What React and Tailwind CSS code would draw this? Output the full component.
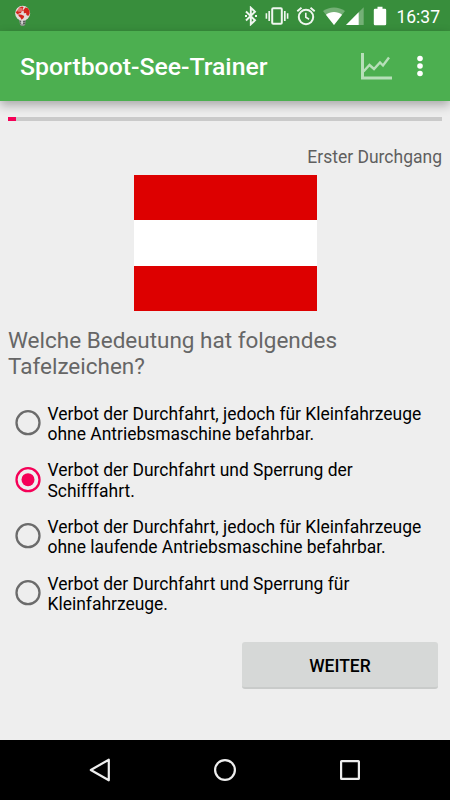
import { useState } from "react"

const answers = [
	["Verbot der Durchfahrt, jedoch für Kleinfahrzeuge", "ohne Antriebsmaschine befahrbar."],
	["Verbot der Durchfahrt und Sperrung der", "Schifffahrt."],
	["Verbot der Durchfahrt, jedoch für Kleinfahrzeuge", "ohne laufende Antriebsmaschine befahrbar."],
	["Verbot der Durchfahrt und Sperrung für", "Kleinfahrzeuge."],
]

function BulbIcon() {
	return (
		<svg className="ml-[14px] h-[22px] w-[18px]" viewBox="0 0 18 22">
			<path d="M5 14.5h7l-.8 5.2-1.4 1.3H7.4L6 19.7z" fill="#8b928b" />
			<path d="M6 16.3h5.4M6.3 18.4h5" stroke="#4b504b" strokeWidth=".9" />
			<path d="M7.3 15.3h1.5v4H7.3z" fill="#e4e4e4" />
			<circle cx="8.6" cy="8.2" r="7.5" fill="#e3dad8" />
			<path
				d="M3 5.4 5 2.8 8 1.4l1.6.8-.8 1.6.8 1.6-2 1-.6 1.6-2.2.4-1 1.2-2-1.8zM9.6 5l1.7-2.4 2.3.4 1.9 2.6.2 3-1.4 2.4-1.9-1-.3-2.1-2.2.3zM4.4 9.2l3.2.5 2.6 1.2-.6 2.2-2 1.6-1.2-2.3-1.8-1.4z"
				fill="#d3261c"
			/>
			<ellipse cx="5.8" cy="4.8" rx="3" ry="2" fill="#fff" opacity=".35" />
		</svg>
	)
}

function StatusBar() {
	return (
		<div className="flex h-[31px] items-center bg-[#388e3c] text-white">
			<BulbIcon />
			<div className="ml-auto flex items-center">
				<svg className="h-[20px] w-[14px]" viewBox="0 0 14 20" fill="none" stroke="#eff6ef" strokeWidth="1.9">
					<path d="m2 5.5 9 8.8-4.2 4V1.7l4.2 4-9 8.8" />
					<path d="M1 10h2M11 10h2" />
				</svg>
				<svg className="ml-[7px] h-[20px] w-[24px]" viewBox="0 0 24 20" fill="none" stroke="#eff6ef">
					<rect x="7.2" y="2.2" width="9.6" height="15.6" rx="1" strokeWidth="2" />
					<path d="M4.2 5v10M19.8 5v10" strokeWidth="1.7" />
					<path d="M1.4 7.2v5.6M22.6 7.2v5.6" strokeWidth="1.6" />
				</svg>
				<svg className="ml-[7px] h-[20px] w-[20px]" viewBox="0 0 20 20" fill="none" stroke="#eff6ef">
					<circle cx="10" cy="11" r="7.2" strokeWidth="2" />
					<path d="M1.3 5.2 5.5 1.7M18.7 5.2l-4.2-3.5" strokeWidth="1.9" />
					<path d="M9.8 6.8v4.5l3.3 2" strokeWidth="1.6" />
				</svg>
				<svg className="ml-[6px] h-[20px] w-[24px]" viewBox="0 0 24 20" fill="#fff">
					<path d="M12 19 1 5.1C4.2 2.8 8 1.5 12 1.5s7.8 1.3 11 3.6z" opacity=".3" />
					<path d="M12 19 3.9 8.700C6.2 7 9 6.1 12 6.1s5.8.9 8.1 2.6z" />
				</svg>
				<svg className="h-[20px] w-[18px]" viewBox="0 0 18 20" fill="#fff">
					<path d="M0 19 17.7 1.3V19z" opacity=".3" />
					<path d="M0 19 12.7 6.3V19z" />
				</svg>
				<svg className="ml-[9px] h-[20px] w-[14px]" viewBox="0 0 14 20" fill="#fff">
					<path d="M4.5.7h5v2H12q1.2 0 1.2 1.2v14.2q0 1.2-1.2 1.2H2Q.8 19.3.8 18.1V3.9Q.8 2.7 2 2.7h2.5z" />
				</svg>
				<span className="mr-[10px] ml-[9px] pt-[2px] text-[17.5px] leading-5">16:37</span>
			</div>
		</div>
	)
}

function AppBar() {
	return (
		<div className="relative flex h-[70px] items-center bg-[#4caf50] pl-[20px] text-white shadow-[0_4px_10px_rgba(0,0,0,0.3)]">
			<h1 className="pt-[2px] text-[24.8px] leading-[30px] font-medium">Sportboot-See-Trainer</h1>
			<svg className="mr-[2px] ml-auto h-[28px] w-[32px]" viewBox="0 0 32 28" fill="none" stroke="#b7dfb9">
				<path d="M2.5 1v25H32" strokeWidth="3" />
				<path d="m3.5 19.5 6-6.5 4.5 4 6-6.5 3 3 6-8" strokeWidth="2.4" />
			</svg>
			<svg className="mr-[25px] ml-[21px] h-[22px] w-[10px]" viewBox="0 0 10 22" fill="#fff">
				<circle cx="5" cy="3.5" r="2.8" />
				<circle cx="5" cy="11" r="2.8" />
				<circle cx="5" cy="18.5" r="2.8" />
			</svg>
		</div>
	)
}

function Answer({ lines, checked, onSelect }) {
	return (
		<button
			role="radio"
			aria-checked={checked}
			onClick={onSelect}
			className="flex h-[56.7px] items-center pl-[6.5px] text-left"
		>
			<svg className="h-[26px] w-[26px]" viewBox="0 0 26 26">
				<circle
					cx="13"
					cy="12.7"
					r="11.5"
					fill="none"
					stroke={checked ? "#f50057" : "#6b6b6b"}
					strokeWidth="2.3"
				/>
				{checked && <circle cx="13" cy="12.7" r="6.5" fill="#f50057" />}
			</svg>
			<span className="ml-[7px] pt-[2.5px] text-[17.47px] leading-[20.5px] whitespace-nowrap text-black">
				{lines[0]}
				<br />
				{lines[1]}
			</span>
		</button>
	)
}

function NavBar() {
	return (
		<div className="flex h-[60px] items-center justify-between bg-black px-[87px]">
			<svg className="h-[26px] w-[26px]" viewBox="0 0 26 26" fill="none" stroke="#eee" strokeWidth="2.2">
				<path d="M21.8 2.7v20.6L3.8 13z" strokeLinejoin="round" />
			</svg>
			<svg className="h-[26px] w-[26px]" viewBox="0 0 26 26" fill="none" stroke="#eee" strokeWidth="2.2">
				<circle cx="13" cy="13" r="9.9" />
			</svg>
			<svg className="h-[26px] w-[26px]" viewBox="0 0 26 26" fill="none" stroke="#eee" strokeWidth="2.2">
				<rect x="4.1" y="4.1" width="17.8" height="17.8" rx=".5" />
			</svg>
		</div>
	)
}

export default function App() {
	const [selected, setSelected] = useState(1)

	return (
		<div className="flex h-[800px] w-[450px] flex-col bg-[#eeeeee] font-[Roboto,sans-serif]">
			<StatusBar />
			<AppBar />
			<main className="flex flex-1 flex-col px-2 pt-4">
				<div className="h-1 shrink-0 bg-[#cacaca]">
					<div className="h-1 w-2 bg-[#f50057]" />
				</div>
				<div className="mt-[26px] text-right text-[17.5px] leading-5 text-[#5f5f5f]">Erster Durchgang</div>
				<div className="mt-[8px] flex h-[136px] w-[183px] flex-col self-center">
					<div className="h-[45px] bg-[#dd0000]" />
					<div className="h-[46px] bg-white" />
					<div className="h-[45px] bg-[#dd0000]" />
				</div>
				<h2 className="mt-[16px] text-[22.5px] leading-[26px] text-[#666666]">
					Welche Bedeutung hat folgendes
					<br />
					Tafelzeichen?
				</h2>
				<div role="radiogroup" className="mt-[15.5px] flex flex-col">
					{answers.map((lines, i) => (
						<Answer key={i} lines={lines} checked={selected === i} onSelect={() => setSelected(i)} />
					))}
				</div>
				<button className="mt-[21px] mr-1 h-[47px] w-[196px] self-end rounded-[3px] border-b-2 border-[#c9cbca] bg-[#d6d8d7] pt-[2px] text-[17.5px] font-medium text-black">
					WEITER
				</button>
			</main>
			<NavBar />
		</div>
	)
}
